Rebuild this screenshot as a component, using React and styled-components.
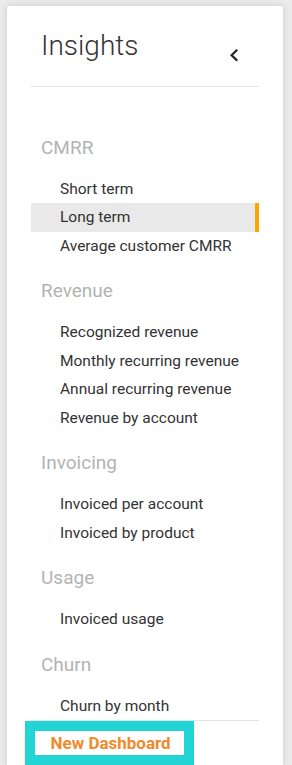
import React from "react";
import styled, { createGlobalStyle } from "styled-components";

const Global = createGlobalStyle`
  html, body { margin: 0; padding: 0; }
  body {
    background: #ececec;
    font-family: Roboto, "Liberation Sans", Arial, sans-serif;
    overflow: hidden;
  }
`;

const Page = styled.div`
  padding: 6px 9px 0 7px;
  height: 100vh;
  box-sizing: border-box;
`;

const Card = styled.aside`
  background: #fff;
  width: 276px;
  height: 100%;
  box-sizing: border-box;
  padding: 0 24px;
  border-radius: 2px 2px 0 0;
  box-shadow: 0 0 7px rgba(0, 0, 0, 0.16);
  display: flex;
  flex-direction: column;
`;

const Header = styled.header`
  display: flex;
  justify-content: space-between;
  align-items: flex-start;
  padding: 24px 0 25px 10px;
  border-bottom: 1px solid #e3e3e3;
`;

const Title = styled.h1`
  margin: 0;
  font-size: 28px;
  line-height: 31px;
  font-weight: 300;
  color: #333;
`;

const Collapse = styled.button`
  border: 0;
  background: none;
  padding: 0;
  width: 20px;
  height: 20px;
  margin: 14.5px 15.5px -3.5px 0;
  display: flex;
  cursor: pointer;
`;

const Nav = styled.nav`
  padding-top: 46.5px;
  display: flex;
  flex-direction: column;
  gap: 17px;
`;

const Section = styled.section`
  display: flex;
  flex-direction: column;
`;

const SectionTitle = styled.h2`
  margin: 0 0 13px;
  padding-left: 10px;
  font-size: 19px;
  line-height: 28px;
  font-weight: 400;
  color: #b3b3b3;
`;

const Item = styled.a`
  display: block;
  height: 28.5px;
  line-height: 28.5px;
  padding-left: 29px;
  font-size: 15.5px;
  color: #333;
  text-decoration: none;
  box-sizing: border-box;
  background: ${(p) => (p.$active ? "#e9e9e9" : "transparent")};
  border-right: 4px solid ${(p) => (p.$active ? "#ffa500" : "transparent")};
  white-space: nowrap;
`;

const Footer = styled.footer`
  border-top: 1px solid #e3e3e3;
  padding: 10px 0 0 4px;
`;

const NewButton = styled.button`
  width: 149px;
  height: 24px;
  border: 0;
  background: #fff;
  padding: 0 0 0 15.5px;
  text-align: left;
  font-family: Roboto, "Liberation Sans", Arial, sans-serif;
  font-size: 17px;
  line-height: 24px;
  font-weight: 700;
  color: #f08a2c;
  outline: 10px solid #22d5d4;
  cursor: pointer;
  white-space: nowrap;
`;

const sections = [
  { title: "CMRR", items: ["Short term", "Long term", "Average customer CMRR"] },
  {
    title: "Revenue",
    items: [
      "Recognized revenue",
      "Monthly recurring revenue",
      "Annual recurring revenue",
      "Revenue by account",
    ],
  },
  { title: "Invoicing", items: ["Invoiced per account", "Invoiced by product"] },
  { title: "Usage", items: ["Invoiced usage"] },
  { title: "Churn", items: ["Churn by month"] },
];

export default function App() {
  return (
    <>
      <Global />
      <Page>
        <Card>
          <Header>
            <Title>Insights</Title>
            <Collapse aria-label="Collapse">
              <svg width="20" height="20" viewBox="0 0 20 20">
                <polyline
                  points="13.2,4.8 7.6,10.2 13.2,15.6"
                  fill="none"
                  stroke="#222"
                  strokeWidth="2.2"
                />
              </svg>
            </Collapse>
          </Header>
          <Nav>
            {sections.map((s) => (
              <Section key={s.title}>
                <SectionTitle>{s.title}</SectionTitle>
                {s.items.map((it) => (
                  <Item key={it} href="#" $active={it === "Long term"}>
                    {it}
                  </Item>
                ))}
              </Section>
            ))}
          </Nav>
          <Footer>
            <NewButton>New Dashboard</NewButton>
          </Footer>
        </Card>
      </Page>
    </>
  );
}
